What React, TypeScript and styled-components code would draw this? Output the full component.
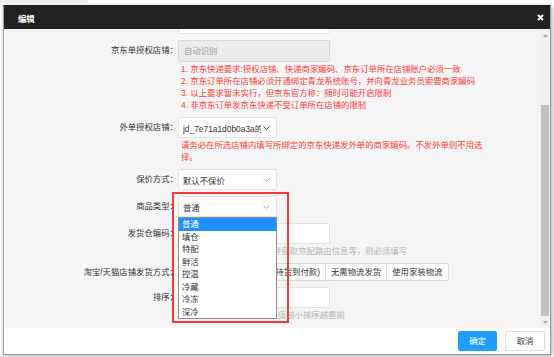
import React, { useLayoutEffect, useRef } from "react";
import styled, { createGlobalStyle } from "styled-components";

const GlobalStyle = createGlobalStyle`
  html, body {
    margin: 0;
    padding: 0;
    background: #fff;
  }
  body {
    font-family: "Liberation Sans", "Noto Sans CJK SC", sans-serif;
    font-size: 8.4px;
    color: #333;
  }
  * {
    box-sizing: border-box;
  }
`;

const jdNotes = [
  "1. 京东快递要求:授权店铺、快递商家编码、京东订单所在店铺账户必须一致",
  "2. 京东订单所在店铺必须开通绑定青龙系统账号，并向青龙业务员索要商家编码",
  "3. 以上要求暂未实行，但京东官方称：随时可能开启限制",
  "4. 非京东订单发京东快递不受订单所在店铺的限制",
];

const goodsTypes = ["普通", "填仓", "特配", "鲜活", "控温", "冷藏", "冷冻", "深冷"];

// 发货方式按钮，第一个按钮较宽
const shipWays = [
  { text: "自己联系物流发货(支持货到付款)", width: 148 },
  { text: "无需物流发货" },
  { text: "使用家装物流" },
];

function Chevron({ dark }: { dark?: boolean }) {
  return (
    <svg width="7" height="4" viewBox="0 0 7 4">
      <polyline
        points="0.5,0.5 3.5,3.5 6.5,0.5"
        fill="none"
        stroke={dark ? "#444" : "#aaa"}
        strokeWidth="0.9"
      />
    </svg>
  );
}

export default function App() {
  // 弹窗内容滚动到底部
  const scrollRef = useRef<HTMLDivElement>(null);
  useLayoutEffect(() => {
    const el = scrollRef.current;
    if (el) el.scrollTop = el.scrollHeight;
  }, []);

  return (
    <Page>
      <GlobalStyle />
      <Modal>
        <Header>
          <HeaderTitle>编辑</HeaderTitle>
          <CloseBtn>
            <svg width="7" height="7" viewBox="0 0 7 7">
              <path d="M1 1 L6 6 M6 1 L1 6" stroke="#fff" strokeWidth="1.8" />
            </svg>
          </CloseBtn>
        </Header>
        <Body>
          <Scroller ref={scrollRef}>
            <Form>
              <Row>
                <Label>快递公司：</Label>
                <Select>
                  <SelectText>京东快递</SelectText>
                  <Chevron />
                </Select>
              </Row>
              <Row>
                <Label>商家编码：</Label>
                <Field>
                  <Input />
                </Field>
              </Row>
              <Row>
                <Label>京东单授权店铺：</Label>
                <Field>
                  <Input $disabled $tall>自动识别</Input>
                  <Notes $red>
                    {jdNotes.map((n) => (
                      <div key={n}>{n}</div>
                    ))}
                  </Notes>
                </Field>
              </Row>
              <Row>
                <Label>外单授权店铺：</Label>
                <Field>
                  <Select>
                    <SelectText>jd_7e71a1d0b0a3a的京东店铺</SelectText>
                    <Chevron dark />
                  </Select>
                  <Notes $red>
                    请务必在所选店铺内填写所绑定的京东快递发外单的商家编码。不发外单则不用选择。
                  </Notes>
                </Field>
              </Row>
              <Row>
                <Label>保价方式：</Label>
                <Select>
                  <SelectText>默认不保价</SelectText>
                  <Chevron />
                </Select>
              </Row>
              <Row>
                <Label>商品类型：</Label>
                <Select>
                  <SelectText>普通</SelectText>
                  <Chevron />
                  <OptionList>
                    {goodsTypes.map((g, i) => (
                      <OptionItem key={g} $active={i === 0}>
                        {g}
                      </OptionItem>
                    ))}
                  </OptionList>
                  <Highlight />
                </Select>
              </Row>
              <Row>
                <Label>发货仓编码：</Label>
                <Field>
                  <Input />
                  <Notes>若使用京东仓储配送服务并获取京配路由信息等，则必须填写</Notes>
                </Field>
              </Row>
              <Row>
                <Label $short>淘宝/天猫店铺发货方式：</Label>
                <BtnGroup>
                  {shipWays.map((w) => (
                    <GroupBtn key={w.text} $width={w.width}>
                      {w.text}
                    </GroupBtn>
                  ))}
                </BtnGroup>
              </Row>
              <Row $last>
                <Label>排序：</Label>
                <Field>
                  <Input />
                  <Notes>介于0-255之间的整数，数值越小排序越靠前</Notes>
                </Field>
              </Row>
            </Form>
          </Scroller>
          <ScrollBar>
            <ScrollArrow>
              <svg width="5" height="3" viewBox="0 0 5 3">
                <polygon points="0,3 2.5,0 5,3" fill="#a3a3a3" />
              </svg>
            </ScrollArrow>
            <ScrollTrack>
              <ScrollThumb />
            </ScrollTrack>
            <ScrollArrow>
              <svg width="5" height="3" viewBox="0 0 5 3">
                <polygon points="0,0 2.5,3 5,0" fill="#a3a3a3" />
              </svg>
            </ScrollArrow>
          </ScrollBar>
        </Body>
        <Footer>
          <FooterBtn $primary>确定</FooterBtn>
          <FooterBtn>取消</FooterBtn>
        </Footer>
      </Modal>
    </Page>
  );
}

const Page = styled.div`
  width: 554px;
  height: 357px;
  padding: 5px 0 0 3px;
  background: linear-gradient(#efefef, #efefef) no-repeat 0 0 / 88px 3px, #fff;
  overflow: hidden;
`;

const Modal = styled.div`
  width: 548px;
  height: 350px;
  display: flex;
  flex-direction: column;
  border: 1px solid #9c9c9c;
  border-top-color: #222;
  background: #fff;
  box-shadow: 1px 1px 4px rgba(0, 0, 0, 0.35);
`;

const Header = styled.div`
  height: 23px;
  flex-shrink: 0;
  display: flex;
  align-items: center;
  justify-content: space-between;
  padding: 0 6px 0 14px;
  background: #222;
`;

const HeaderTitle = styled.span`
  color: #fff;
  font-size: 8.4px;
  font-weight: bold;
`;

const CloseBtn = styled.span`
  display: flex;
  align-items: center;
`;

const Body = styled.div`
  height: 299px;
  flex-shrink: 0;
  display: flex;
  background: #f5f5f5;
`;

const Scroller = styled.div`
  flex: 1;
  overflow: hidden;
`;

const Form = styled.div`
  padding: 8px 0 7px 0;
`;

const Row = styled.div<{ $last?: boolean }>`
  display: flex;
  align-items: flex-start;
  margin-bottom: ${(p) => (p.$last ? 0 : 6)}px;
`;

const Label = styled.div<{ $short?: boolean }>`
  width: 174px;
  flex-shrink: 0;
  text-align: right;
  line-height: ${(p) => (p.$short ? 18 : 21)}px;
  color: #333;
  white-space: nowrap;
`;

const Field = styled.div`
  width: 308px;
  display: flex;
  flex-direction: column;
`;

const Input = styled.div<{ $disabled?: boolean; $tall?: boolean }>`
  width: 152px;
  height: ${(p) => (p.$tall ? 22 : 21)}px;
  line-height: ${(p) => (p.$tall ? 20 : 19)}px;
  padding: 0 5px;
  border: 1px solid ${(p) => (p.$disabled ? "#d8d8d8" : "#e2e2e2")};
  border-radius: 2px;
  background: ${(p) => (p.$disabled ? "#ececec" : "#fff")};
  color: #999;
`;

const Select = styled.div`
  position: relative;
  width: 99px;
  height: 21px;
  display: flex;
  align-items: center;
  gap: 2px;
  padding: 0 4px 0 4px;
  border: 1px solid #e2e2e2;
  border-radius: 2px;
  background: #fff;
  svg {
    flex-shrink: 0;
    margin-right: 2px;
  }
`;

const SelectText = styled.span`
  flex: 1;
  overflow: hidden;
  white-space: nowrap;
  color: #333;
`;

const Notes = styled.div<{ $red?: boolean }>`
  padding: 1px 0 0 3px;
  line-height: 12px;
  color: ${(p) => (p.$red ? "#ff3a3a" : "#b4b4b4")};
`;

const OptionList = styled.div`
  position: absolute;
  top: 20px;
  left: -1px;
  z-index: 2;
  width: 99px;
  border: 1px solid #8c8c8c;
  background: #fff;
`;

const OptionItem = styled.div<{ $active?: boolean }>`
  height: 12.5px;
  line-height: 12.5px;
  padding-left: 3px;
  background: ${(p) => (p.$active ? "#1e90ff" : "#fff")};
  color: ${(p) => (p.$active ? "#fff" : "#333")};
`;

const Highlight = styled.div`
  position: absolute;
  left: -7px;
  top: -5px;
  z-index: 3;
  width: 117px;
  height: 131px;
  border: 2px solid #f0393d;
  pointer-events: none;
`;

const BtnGroup = styled.div`
  display: flex;
`;

const GroupBtn = styled.div<{ $width?: number }>`
  width: ${(p) => (p.$width ? `${p.$width}px` : "auto")};
  height: 18px;
  line-height: 16px;
  padding: 0 5px;
  border: 1px solid #d9d9d9;
  margin-left: -1px;
  background: #fff;
  color: #333;
  text-align: right;
  white-space: nowrap;
  overflow: hidden;
  &:first-child {
    margin-left: 0;
    border-radius: 2px 0 0 2px;
  }
  &:last-child {
    border-radius: 0 2px 2px 0;
  }
`;

const ScrollBar = styled.div`
  width: 10px;
  display: flex;
  flex-direction: column;
  background: #f1f1f1;
`;

const ScrollArrow = styled.div`
  height: 12px;
  display: flex;
  align-items: center;
  justify-content: center;
`;

const ScrollTrack = styled.div`
  flex: 1;
  display: flex;
  flex-direction: column;
  justify-content: flex-end;
  padding: 0 1px;
`;

const ScrollThumb = styled.div`
  height: 211px;
  background: #c1c1c1;
`;

const Footer = styled.div`
  flex: 1;
  display: flex;
  align-items: center;
  justify-content: flex-end;
  gap: 8px;
  padding-right: 5px;
  background: #fff;
`;

const FooterBtn = styled.div<{ $primary?: boolean }>`
  width: ${(p) => (p.$primary ? 39 : 40)}px;
  height: 20px;
  line-height: 18px;
  text-align: center;
  border: 1px solid ${(p) => (p.$primary ? "#1e9fff" : "#dedede")};
  border-radius: 2px;
  background: ${(p) => (p.$primary ? "#1e9fff" : "#fff")};
  color: ${(p) => (p.$primary ? "#fff" : "#333")};
`;
